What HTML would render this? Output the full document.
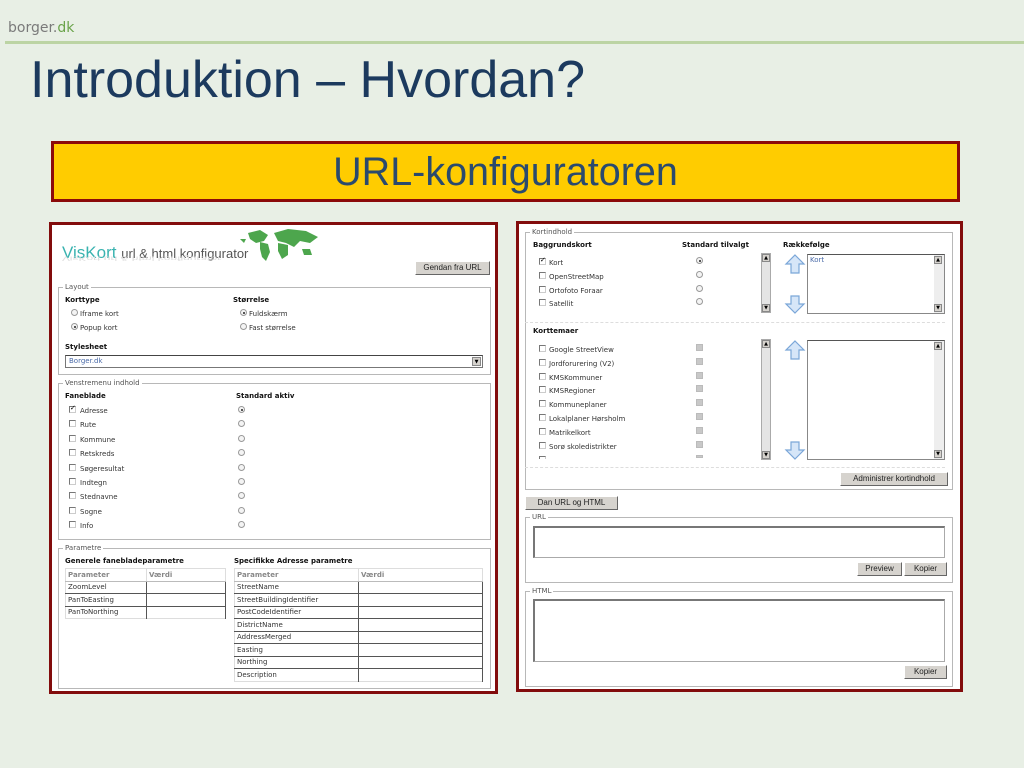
<!DOCTYPE html>
<html><head><meta charset="utf-8">
<style>
*{margin:0;padding:0;box-sizing:border-box}
body{width:1024px;height:768px;background:#e8efe5;position:relative;overflow:hidden;font-family:"DejaVu Sans","Liberation Sans",sans-serif}
.a{position:absolute;white-space:nowrap}
.s{font-size:7px;color:#333}
.b{font-size:7px;font-weight:bold;color:#111}
.fs{position:absolute;border:1px solid #b8b8b8}
.lg{position:absolute;top:-5px;left:4px;background:#fff;font-size:7px;color:#555;padding:0 2px;line-height:9px}
.cb{position:absolute;width:7px;height:7px;border:1px solid #777;border-right-color:#ccc;border-bottom-color:#ccc;background:#fff}
.rd{position:absolute;width:7px;height:7px;border-radius:50%;border:1px solid #999;background:#f4f4f4}
.rd.on::after{content:"";position:absolute;left:1.5px;top:1.5px;width:2px;height:2px;border-radius:50%;background:#222}
.gb{position:absolute;width:7px;height:7px;background:#c8c8c8;border:1px solid #bbb}
.btn{position:absolute;background:#d6d3ce;border:1px solid #fff;border-right-color:#666;border-bottom-color:#666;font-family:"Liberation Sans",sans-serif;font-size:8px;color:#222;text-align:center;line-height:11px}
.ta{position:absolute;border:1px solid #aaa;border-top:2px solid #777;border-left:2px solid #777;background:#fff}
.sb{position:absolute;width:10px;background:#e4e4e4;border:1px solid #aaa}
.sb i,.sb b{position:absolute;left:0;width:8px;height:8px;background:#d6d3ce;border:1px solid #888;font-size:5px;line-height:6px;text-align:center;font-style:normal}
table{position:absolute;border-collapse:collapse;font-size:7px;color:#333}
td{border-bottom:1px solid #555;border-right:1px solid #555;height:12.5px;padding-left:2px;white-space:nowrap}
tr:first-child td{color:#888;font-weight:bold;border-bottom:1px solid #bbb;border-right:1px solid #ddd}
</style></head><body>
<div class="a" style="left:8px;top:20px;font-family:'DejaVu Sans',sans-serif;font-size:14px;color:#7a7a7a">borger.<span style="color:#6aa34a">dk</span></div>
<div class="a" style="left:5px;top:41px;width:1019px;height:3px;background:#bcd4a4"></div>
<div class="a" style="left:30px;top:50px;font-family:'Liberation Sans',sans-serif;font-size:52px;color:#1c3a5e">Introduktion – Hvordan?</div>

<div class="a" style="left:51px;top:141px;width:909px;height:61px;background:#ffcc00;border:3px solid #8b0a0a"></div>
<div class="a" style="left:51px;top:150px;width:909px;text-align:center;font-family:'Liberation Sans',sans-serif;font-size:39.5px;color:#2a4a6e">URL-konfiguratoren</div>

<!-- LEFT PANEL -->
<div class="a" style="left:49px;top:222px;width:449px;height:472px;background:#fff;border:3px solid #820c0c"></div>
<svg class="a" style="left:238px;top:227px" width="82" height="38" viewBox="0 0 82 38"><g fill="#4da64d"><path d="M10 6 L22 3 L30 8 L26 14 L18 16 L12 12Z"/><path d="M22 15 L30 17 L32 25 L28 34 L24 30 L22 22Z"/><path d="M36 6 L50 2 L68 4 L80 10 L72 16 L62 14 L56 20 L48 16 L40 14Z"/><path d="M40 16 L50 18 L50 28 L44 32 L40 24Z"/><path d="M64 22 L72 22 L74 28 L66 28Z"/><path d="M2 12 L8 12 L6 16Z"/></g></svg>
<div class="a" style="left:62px;top:243px;font-family:'Liberation Sans',sans-serif;font-size:17px;color:#3ab3b0">VisKort <span style="font-size:13px;color:#555">url &amp; html konfigurator</span></div>
<div class="a" style="left:62px;top:262px;font-family:'Liberation Sans',sans-serif;font-size:12px;color:#ddd;transform:scaleY(-0.5);transform-origin:top">VisKort url &amp; html konfigurator</div>
<div class="btn" style="left:415px;top:261px;width:75px;height:14px">Gendan fra URL</div>

<div class="fs" style="left:58px;top:287px;width:433px;height:88px"><span class="lg">Layout</span></div>
<div class="a b" style="left:65px;top:296px">Korttype</div>
<div class="a b" style="left:233px;top:296px">Størrelse</div>
<div class="rd" style="left:71px;top:309px"></div><div class="a s" style="left:80px;top:310px">Iframe kort</div>
<div class="rd on" style="left:71px;top:323px"></div><div class="a s" style="left:80px;top:324px">Popup kort</div>
<div class="rd on" style="left:240px;top:309px"></div><div class="a s" style="left:249px;top:310px">Fuldskærm</div>
<div class="rd" style="left:240px;top:323px"></div><div class="a s" style="left:249px;top:324px">Fast størrelse</div>
<div class="a b" style="left:65px;top:343px">Stylesheet</div>
<div class="a" style="left:65px;top:355px;width:418px;height:13px;border:1px solid #777;border-top-color:#444"><span class="a" style="left:3px;top:1px;font-size:7px;color:#4a6aa8">Borger.dk</span><span class="a" style="right:1px;top:1px;width:9px;height:9px;background:#d6d3ce;border:1px solid #888;font-size:5px;text-align:center;line-height:8px">▼</span></div>

<div class="fs" style="left:58px;top:383px;width:433px;height:157px"><span class="lg">Venstremenu indhold</span></div>
<div class="a b" style="left:65px;top:392px">Faneblade</div>
<div class="a b" style="left:236px;top:392px">Standard aktiv</div>

<div class="fs" style="left:58px;top:548px;width:433px;height:141px"><span class="lg">Parametre</span></div>
<div class="a b" style="left:65px;top:557px">Generele fanebladeparametre</div>
<div class="a b" style="left:234px;top:557px">Specifikke Adresse parametre</div>
<table style="left:65px;top:568px;width:161px;border:1px solid #ddd"><colgroup><col style="width:81px"><col></colgroup>
<tr><td>Parameter</td><td>Værdi</td></tr><tr><td>ZoomLevel</td><td></td></tr><tr><td>PanToEasting</td><td></td></tr><tr><td style="border-bottom:none">PanToNorthing</td><td style="border-bottom:none"></td></tr></table>
<table style="left:234px;top:568px;width:249px;border:1px solid #ddd"><colgroup><col style="width:124px"><col></colgroup>
<tr><td>Parameter</td><td>Værdi</td></tr><tr><td>StreetName</td><td></td></tr><tr><td>StreetBuildingIdentifier</td><td></td></tr><tr><td>PostCodeIdentifier</td><td></td></tr><tr><td>DistrictName</td><td></td></tr><tr><td>AddressMerged</td><td></td></tr><tr><td>Easting</td><td></td></tr><tr><td>Northing</td><td></td></tr><tr><td style="border-bottom:none">Description</td><td style="border-bottom:none"></td></tr></table>

<!-- RIGHT PANEL -->
<div class="a" style="left:516px;top:221px;width:447px;height:471px;background:#fff;border:3px solid #820c0c"></div>
<div class="fs" style="left:525px;top:232px;width:428px;height:258px"><span class="lg">Kortindhold</span></div>
<div class="a b" style="left:533px;top:241px">Baggrundskort</div>
<div class="a b" style="left:682px;top:241px">Standard tilvalgt</div>
<div class="a b" style="left:783px;top:241px">Rækkefølge</div>
<div class="sb" style="left:761px;top:253px;height:60px"><i style="top:0">▲</i><b style="bottom:0">▼</b></div>
<div class="a" style="left:807px;top:254px;width:138px;height:60px;border:1px solid #888;border-top-color:#555"><span class="a" style="left:2px;top:1px;font-size:7px;color:#4a6aa8">Kort</span><div class="sb" style="right:0;top:0;height:58px;background:#eee;border:none"><i style="top:1px">▲</i><b style="bottom:1px">▼</b></div></div>
<div class="a" style="left:525px;top:322px;width:420px;border-top:1px dashed #ddd"></div>
<div class="a b" style="left:533px;top:327px">Korttemaer</div>
<div class="sb" style="left:761px;top:339px;height:121px"><i style="top:0">▲</i><b style="bottom:0">▼</b></div>
<div class="a" style="left:807px;top:340px;width:138px;height:120px;border:1px solid #888;border-top-color:#555"><div class="sb" style="right:0;top:0;height:118px;background:#eee;border:none"><i style="top:1px">▲</i><b style="bottom:1px">▼</b></div></div>
<div class="a" style="left:525px;top:467px;width:420px;border-top:1px dashed #ddd"></div>
<div class="btn" style="left:840px;top:472px;width:108px;height:14px">Administrer kortindhold</div>
<div class="btn" style="left:525px;top:496px;width:93px;height:14px">Dan URL og HTML</div>
<div class="fs" style="left:525px;top:517px;width:428px;height:66px"><span class="lg">URL</span></div>
<div class="ta" style="left:533px;top:526px;width:412px;height:32px"></div>
<div class="btn" style="left:857px;top:562px;width:45px;height:14px">Preview</div>
<div class="btn" style="left:904px;top:562px;width:43px;height:14px">Kopier</div>
<div class="fs" style="left:525px;top:591px;width:428px;height:96px"><span class="lg">HTML</span></div>
<div class="ta" style="left:533px;top:599px;width:412px;height:63px"></div>
<div class="btn" style="left:904px;top:665px;width:43px;height:14px">Kopier</div>

<svg class="a" style="left:784px;top:254px" width="22" height="210" viewBox="0 0 22 210"><g fill="#d6e6f8" stroke="#7aa6d8" stroke-width="1.2"><path d="M11 1 L20 10 L15 10 L15 19 L7 19 L7 10 L2 10Z"/><path d="M11 59 L20 50 L15 50 L15 42 L7 42 L7 50 L2 50Z"/><path d="M11 87 L20 96 L15 96 L15 105 L7 105 L7 96 L2 96Z"/><path d="M11 205 L20 196 L15 196 L15 188 L7 188 L7 196 L2 196Z"/></g></svg>

<div id="rows"></div>
<script>
var h='';
var L=[['Adresse',1],['Rute'],['Kommune'],['Retskreds'],['Søgeresultat'],['Indtegn'],['Stednavne'],['Sogne'],['Info']];
L.forEach(function(r,i){var y=406+i*14.4;
h+='<div class="cb" style="left:69px;top:'+y+'px">'+(r[1]?'<span style="position:absolute;left:0;top:-3px;font-size:7px">✓</span>':'')+'</div><div class="a s" style="left:80px;top:'+(y+1)+'px">'+r[0]+'</div><div class="rd'+(i==0?' on':'')+'" style="left:238px;top:'+y+'px"></div>';});
var B=[['Kort',1],['OpenStreetMap'],['Ortofoto Foraar'],['Satellit']];
B.forEach(function(r,i){var y=258+i*13.8;
h+='<div class="cb" style="left:539px;top:'+y+'px">'+(r[1]?'<span style="position:absolute;left:0;top:-3px;font-size:7px">✓</span>':'')+'</div><div class="a s" style="left:549px;top:'+(y+1)+'px">'+r[0]+'</div><div class="rd'+(i==0?' on':'')+'" style="left:696px;top:'+(y-1)+'px"></div>';});
var K=['Google StreetView','Jordforurering (V2)','KMSKommuner','KMSRegioner','Kommuneplaner','Lokalplaner Hørsholm','Matrikelkort','Sorø skoledistrikter'];
K.forEach(function(r,i){var y=345+i*13.8;
h+='<div class="cb" style="left:539px;top:'+y+'px"></div><div class="a s" style="left:549px;top:'+(y+1)+'px">'+r+'</div><div class="gb" style="left:696px;top:'+(y-1)+'px"></div>';});
h+='<div class="cb" style="left:539px;top:456px;height:3px;border-bottom:none"></div><div class="gb" style="left:696px;top:455px;height:3px"></div>';
document.getElementById('rows').innerHTML=h;
</script>
</body></html>
